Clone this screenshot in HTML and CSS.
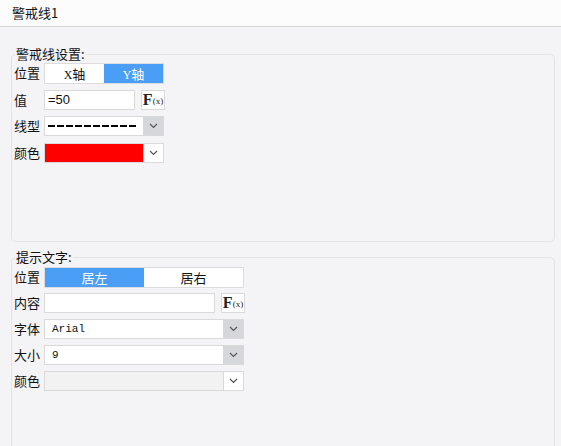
FILE: index.html
```html
<!DOCTYPE html>
<html>
<head>
<meta charset="utf-8">
<link rel="stylesheet" href="styles.css">
</head>
<body>
<div class="header">警戒线1</div>
<div class="content">
  <fieldset class="group g1">
    <legend>警戒线设置:</legend>
    <div class="row">
      <span class="label">位置</span>
      <div class="seg w120">
        <span class="opt"><span class="ser">X</span>轴</span>
        <span class="opt on"><span class="ser">Y</span>轴</span>
      </div>
    </div>
    <div class="row">
      <span class="label">值</span>
      <div class="input w91">=50</div>
      <div class="fx"><span class="fF">F</span><span class="fp">(x)</span></div>
    </div>
    <div class="row">
      <span class="label">线型</span>
      <div class="select w120">
        <div class="sval"><div class="dash"></div></div>
        <div class="arrow grey"><svg width="9" height="6" viewBox="0 0 9 6"><polyline points="1,1 4.5,4.5 8,1" fill="none" stroke="#555" stroke-width="1.2"/></svg></div>
      </div>
    </div>
    <div class="row">
      <span class="label">颜色</span>
      <div class="select w120">
        <div class="sval red"></div>
        <div class="arrow white"><svg width="9" height="6" viewBox="0 0 9 6"><polyline points="1,1 4.5,4.5 8,1" fill="none" stroke="#555" stroke-width="1.2"/></svg></div>
      </div>
    </div>
  </fieldset>
  <fieldset class="group g2">
    <legend>提示文字:</legend>
    <div class="row">
      <span class="label">位置</span>
      <div class="seg w200">
        <span class="opt on">居左</span>
        <span class="opt">居右</span>
      </div>
    </div>
    <div class="row">
      <span class="label">内容</span>
      <div class="input w171"></div>
      <div class="fx"><span class="fF">F</span><span class="fp">(x)</span></div>
    </div>
    <div class="row">
      <span class="label">字体</span>
      <div class="select w200">
        <div class="sval mono">Arial</div>
        <div class="arrow grey"><svg width="9" height="6" viewBox="0 0 9 6"><polyline points="1,1 4.5,4.5 8,1" fill="none" stroke="#555" stroke-width="1.2"/></svg></div>
      </div>
    </div>
    <div class="row">
      <span class="label">大小</span>
      <div class="select w200">
        <div class="sval mono">9</div>
        <div class="arrow grey"><svg width="9" height="6" viewBox="0 0 9 6"><polyline points="1,1 4.5,4.5 8,1" fill="none" stroke="#555" stroke-width="1.2"/></svg></div>
      </div>
    </div>
    <div class="row">
      <span class="label">颜色</span>
      <div class="select w200 disabled">
        <div class="sval"></div>
        <div class="arrow white"><svg width="9" height="6" viewBox="0 0 9 6"><polyline points="1,1 4.5,4.5 8,1" fill="none" stroke="#555" stroke-width="1.2"/></svg></div>
      </div>
    </div>
  </fieldset>
</div>
</body>
</html>
```

FILE: styles.css
```css
* { box-sizing: border-box; }
html, body { margin: 0; padding: 0; }
body {
  width: 561px;
  height: 446px;
  overflow: hidden;
  background: #f4f4f6;
  font-family: "Noto Sans CJK SC", "Liberation Sans", sans-serif;
  font-size: 13px;
  color: #111;
}
.header {
  height: 27px;
  background: #fcfcfc;
  border-bottom: 1px solid #d6d6d6;
  padding-left: 12px;
  line-height: 25px;
}
.content {
  padding: 20px 6px 0 11px;
}
.group {
  margin: 0;
  border: 1px solid #e3e3e6;
  border-radius: 5px;
  padding: 0;
  min-width: 0;
}
.group legend {
  font-size: 13px;
  line-height: 14px;
  height: 14px;
  padding: 0 1px;
  margin-left: 3px;
}
.g1 { height: 195px; padding-top: 2px; }
.g2 { margin-top: 8px; height: 200px; padding-top: 3px; }
.row {
  display: flex;
  align-items: center;
  height: 20px;
  margin-bottom: 6px;
  margin-left: 1px;
}
.g1 .row { margin-bottom: 6.5px; }
.label {
  width: 31px;
  line-height: 20px;
  padding-left: 1px;
}
.seg {
  display: flex;
  height: 21px;
  border: 1px solid #dcdcdc;
  background: #fff;
}
.w120 { width: 120px; }
.w200 { width: 200px; }
.w91 { width: 91px; }
.w171 { width: 171px; }
.opt {
  flex: 1;
  text-align: center;
  line-height: 19px;
  color: #111;
}
.opt.on {
  background: #4a9ef5;
  color: #fff;
}
.ser { font-family: "Liberation Serif", serif; font-size: 12px; }
.input {
  height: 20px;
  border: 1px solid #d9d9d9;
  background: #fff;
  line-height: 18px;
  padding-left: 3px;
  font-family: "Liberation Sans", "Noto Sans CJK SC", sans-serif;
  font-size: 13px;
}
.fx {
  margin-left: 6px;
  width: 24px;
  height: 20px;
  border: 1px solid #d9d9d9;
  background: #fff;
  display: flex;
  align-items: center;
  justify-content: center;
  font-family: "Liberation Serif", serif;
  color: #222;
}
.fF { font-size: 16px; font-weight: bold; line-height: 18px; }
.fp { font-size: 9px; line-height: 18px; margin-top: 2px; }
.select {
  display: flex;
  height: 20px;
  border: 1px solid #d9d9d9;
  background: #fff;
}
.sval {
  flex: 1;
  display: flex;
  align-items: center;
  padding-left: 7px;
  font-size: 11px;
}
.sval.mono {
  font-family: "Liberation Mono", monospace;
  font-size: 11px;
}
.sval.red {
  background: #ff0000;
  padding: 0;
}
.dash {
  width: 88px;
  height: 2px;
  margin-left: -4px;
  background: repeating-linear-gradient(90deg, #000 0 7px, transparent 7px 9px);
}
.arrow {
  width: 20px;
  display: flex;
  align-items: center;
  justify-content: center;
}
.arrow.grey { background: #d6d7da; }
.arrow.white { background: #fff; border-left: 1px solid #d9d9d9; }
.disabled { background: #f2f2f3; }
.disabled .sval { background: #f2f2f3; }
```
